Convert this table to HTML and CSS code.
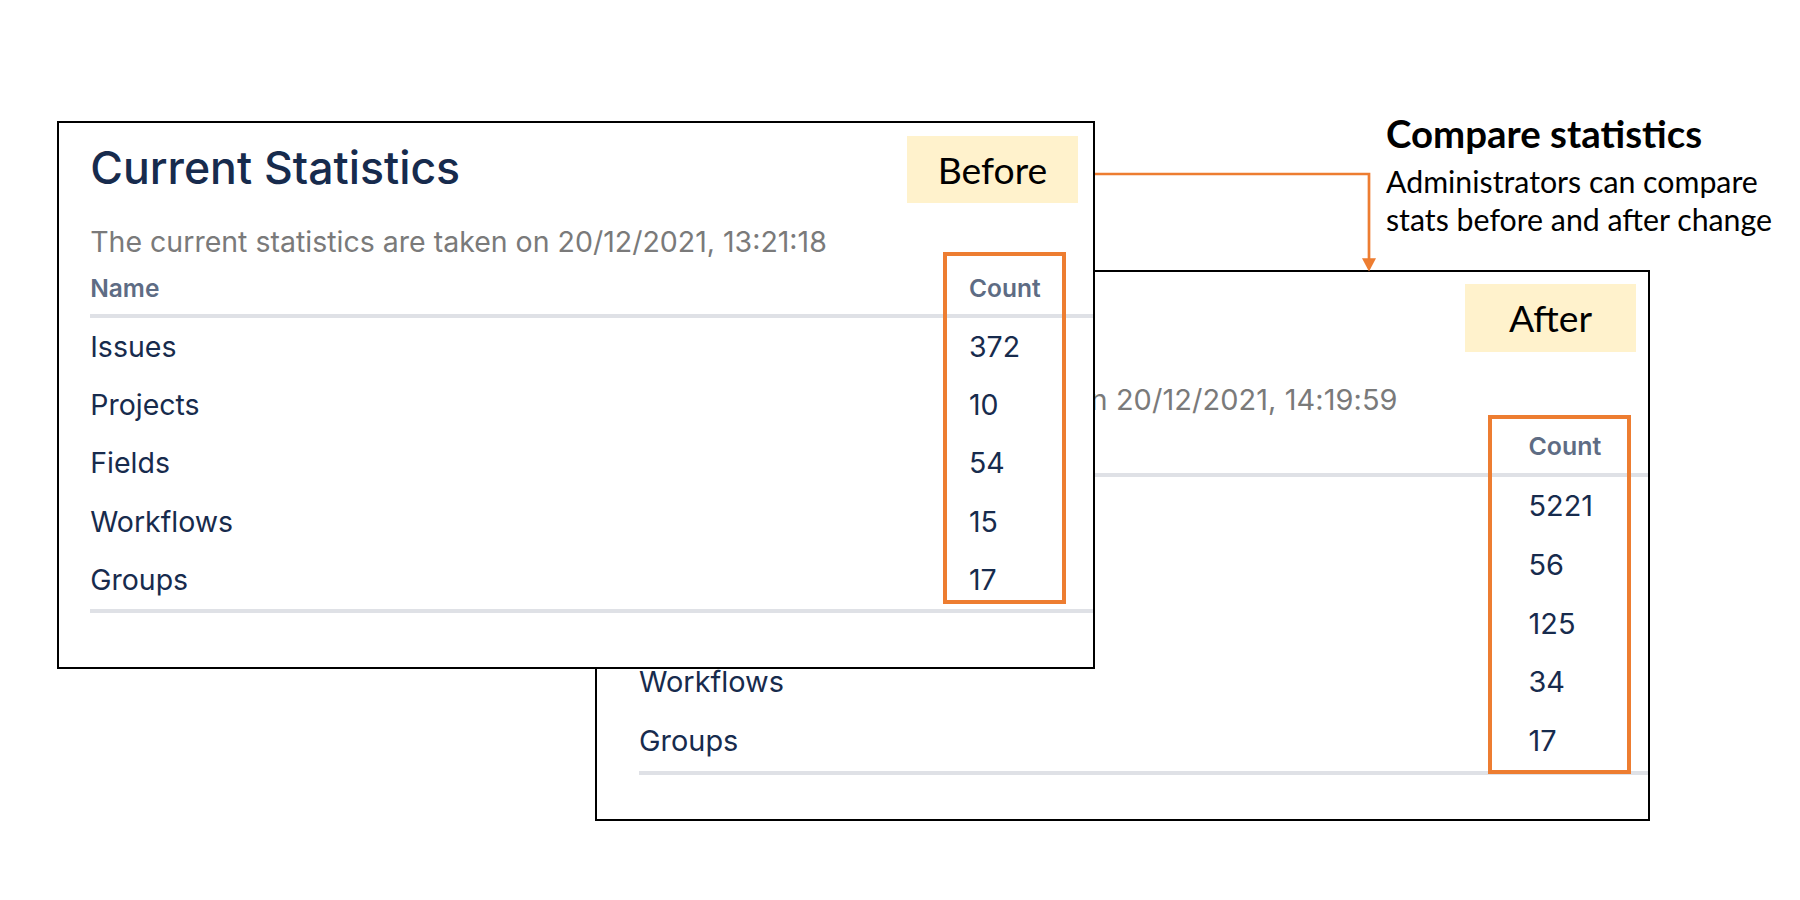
FILE: index.html
```html
<!DOCTYPE html>
<html lang="en">
<head>
<meta charset="utf-8">
<title>Compare statistics</title>
<link rel="stylesheet" href="styles.css">
</head>
<body>
<main class="canvas">

  <section class="card card--after">
    <header class="card__head">
      <h1 class="card__title">Current Statistics</h1>
      <div class="badge">After</div>
    </header>
    <p class="card__sub">The current statistics are taken on 20/12/2021, 14:19:59</p>
    <div class="stats">
      <div class="stats__th">Name</div>
      <div class="stats__th">Count</div>
      <div class="stats__td">Issues</div><div class="stats__td">5221</div>
      <div class="stats__td">Projects</div><div class="stats__td">56</div>
      <div class="stats__td">Fields</div><div class="stats__td">125</div>
      <div class="stats__td">Workflows</div><div class="stats__td">34</div>
      <div class="stats__td stats__td--last">Groups</div><div class="stats__td stats__td--last">17</div>
    </div>
    <div class="highlight"></div>
  </section>

  <section class="card card--before">
    <header class="card__head">
      <h1 class="card__title">Current Statistics</h1>
      <div class="badge">Before</div>
    </header>
    <p class="card__sub">The current statistics are taken on 20/12/2021, 13:21:18</p>
    <div class="stats">
      <div class="stats__th">Name</div>
      <div class="stats__th">Count</div>
      <div class="stats__td">Issues</div><div class="stats__td">372</div>
      <div class="stats__td">Projects</div><div class="stats__td">10</div>
      <div class="stats__td">Fields</div><div class="stats__td">54</div>
      <div class="stats__td">Workflows</div><div class="stats__td">15</div>
      <div class="stats__td stats__td--last">Groups</div><div class="stats__td stats__td--last">17</div>
    </div>
    <div class="highlight"></div>
  </section>

  <svg class="connector" width="1800" height="900" viewBox="0 0 1800 900" aria-hidden="true">
    <polyline points="1095,174 1369,174 1369,260" fill="none" stroke="#ED7D31" stroke-width="2.7"/>
    <polygon points="1362,258.3 1376,258.3 1369,271.5" fill="#ED7D31"/>
  </svg>

  <aside class="callout">
    <h2 class="callout__title">Compare statistics</h2>
    <p class="callout__text">Administrators can compare<br>stats before and after change</p>
  </aside>

</main>
</body>
</html>
```

FILE: styles.css
```css
* { box-sizing: border-box; }

html, body {
  margin: 0;
  padding: 0;
  background: #ffffff;
}

.canvas {
  position: relative;
  width: 1800px;
  height: 900px;
  overflow: hidden;
  background: #ffffff;
  font-family: Inter, "Liberation Sans", Arial, sans-serif;
}

/* ---------- statistics card (screenshot) ---------- */
.card {
  position: absolute;
  display: flex;
  flex-direction: column;
  background: #ffffff;
  border: 2px solid #000000;
  padding: var(--pt) 0 0 var(--pl);
  overflow: hidden;
}

.card--before {
  left: 57px;
  top: 121px;
  width: 1038px;
  height: 548px;
  z-index: 2;
  --s: 1;
  --pt: 12.7px;
  --pl: 31.2px;
  --sub-gap: 21.5px;
  --head-gap: 14px;
  --th-pb: 11.2px;
  --row-h: 58.2px;
  --count-w: 124px;
  --badge-mr: 15px;
  --hl-left: 884.3px;
  --hl-top: 128.7px;
  --hl-w: 122.4px;
  --hl-h: 352.3px;
}

.card--after {
  left: 594.5px;
  top: 270px;
  width: 1055px;
  height: 551px;
  z-index: 1;
  --s: 1.015;
  --pt: 12px;
  --pl: 42.5px;
  --sub-gap: 31px;
  --head-gap: 13.8px;
  --th-pb: 12px;
  --row-h: 58.8px;
  --count-w: 119px;
  --badge-mr: 11.5px;
  --hl-left: 891.3px;
  --hl-top: 142.5px;
  --hl-w: 143.5px;
  --hl-h: 359px;
}

.card__head {
  display: flex;
  justify-content: space-between;
  align-items: flex-start;
  height: 67.6px;
  flex: none;
}

.card__title {
  margin: 5.5px 0 0;
  font-size: calc(44.6px * var(--s));
  line-height: calc(54px * var(--s));
  font-weight: 550;
  color: #172B4D;
  white-space: nowrap;
}

.badge {
  width: 171px;
  height: 67.6px;
  margin-right: var(--badge-mr);
  display: flex;
  align-items: center;
  justify-content: center;
  background: #FFF2CC;
  font-family: Lato, "Open Sans", sans-serif;
  font-size: 37.3px;
  color: #000000;
}

.card__sub {
  margin: var(--sub-gap) 0 0;
  font-size: calc(28.5px * var(--s));
  line-height: calc(34px * var(--s));
  color: #7A7A7A;
  white-space: nowrap;
  flex: none;
}

.card--after .card__sub {
  letter-spacing: 0.08px;
}

.stats {
  display: grid;
  grid-template-columns: 1fr var(--count-w);
  margin-top: var(--head-gap);
  flex: none;
}

.stats__th {
  font-size: calc(24.5px * var(--s));
  line-height: 30px;
  font-weight: 600;
  color: #5E6C84;
  padding-bottom: var(--th-pb);
  border-bottom: 4px solid #DFE1E6;
  white-space: nowrap;
}

.stats__td {
  height: var(--row-h);
  font-size: calc(28.5px * var(--s));
  line-height: var(--row-h);
  color: #172B4D;
  white-space: nowrap;
}

.stats__td--last {
  height: calc(var(--row-h) + 4px);
  border-bottom: 4px solid #DFE1E6;
}

.highlight {
  position: absolute;
  left: var(--hl-left);
  top: var(--hl-top);
  width: var(--hl-w);
  height: var(--hl-h);
  border: 4.5px solid #ED7D31;
  pointer-events: none;
}

/* ---------- connector arrow ---------- */
.connector {
  position: absolute;
  left: 0;
  top: 0;
  z-index: 3;
  pointer-events: none;
}

/* ---------- callout ---------- */
.callout {
  position: absolute;
  left: 1386px;
  top: 113px;
  z-index: 4;
  font-family: Lato, "Open Sans", sans-serif;
  color: #000000;
}

.callout__title {
  margin: 0;
  font-size: 38.4px;
  line-height: 41px;
  font-weight: 700;
  white-space: nowrap;
}

.callout__text {
  margin: 7.5px 0 0;
  font-size: 30.3px;
  line-height: 38px;
  font-weight: 400;
  white-space: nowrap;
}
```
